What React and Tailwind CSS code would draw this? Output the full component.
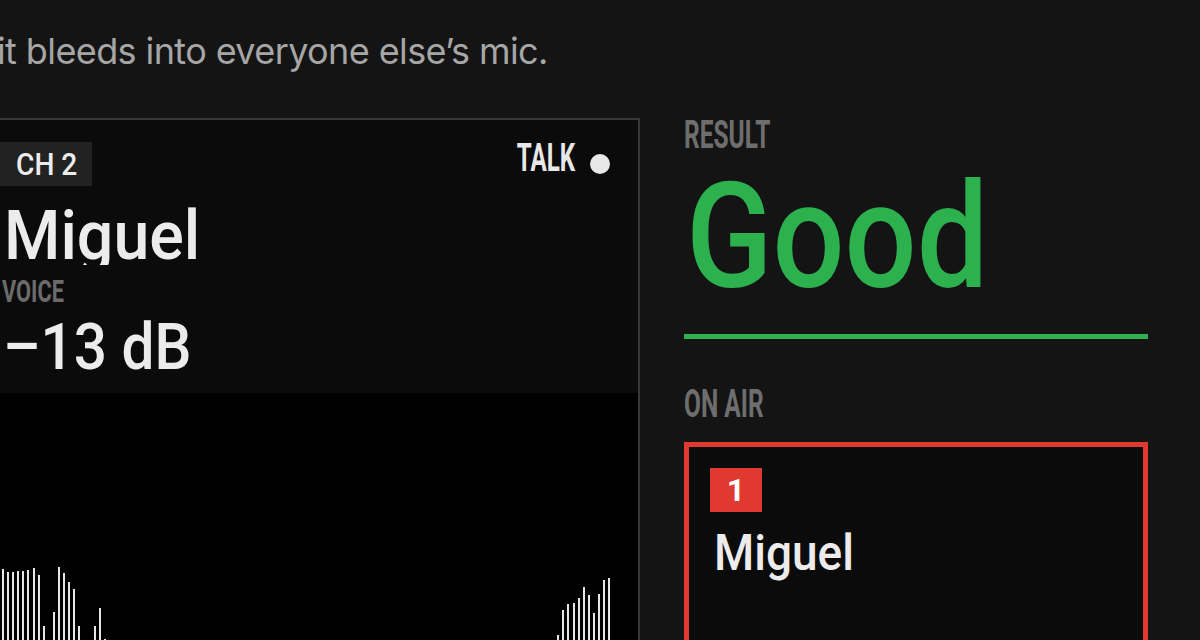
import React from "react";

// Visible bar heights (px) of the level history, oldest on the left.
const LEVELS = (() => {
  const head = [71, 68, 68, 69, 69, 70, 72, 65, 14, 0, 28, 73, 67, 58, 51, 14, 0, 0, 14, 32, 1];
  const tail = [5, 30, 36, 37, 42, 53, 45, 27, 46, 60, 62];
  const silence = Array(120 - head.length - tail.length).fill(0);
  return [...head, ...silence, ...tail];
})();

function Waveform() {
  return (
    <div className="h-[267px] bg-black pl-[23px]">
      <div className="flex h-full w-[610px] items-end justify-between">
        {LEVELS.map((h, i) => (
          <span
            key={i}
            className="block w-[2px] shrink-0 bg-[#e6e6e6]"
            style={{ height: `${h + 20}px` }}
          />
        ))}
      </div>
    </div>
  );
}

function ChannelCard() {
  return (
    <section className="-ml-[23px] w-[663px] shrink-0 border-2 border-b-0 border-[#383838] bg-[#0b0b0b]">
      <div className="pl-[21px] pr-[28px] pt-[22px] pb-[18px]">
        <div className="flex items-start justify-between">
          <span className="flex h-[44px] w-[92px] items-center overflow-hidden bg-[#222222] pl-[16px] text-[32px] font-medium text-[#ececec]">
            <span className="inline-block origin-left scale-x-[0.88] whitespace-nowrap">CH 2</span>
          </span>
          <div className="flex items-start gap-[15px]">
            <span className="-mt-[1px] inline-block origin-right scale-x-[0.62] text-[39px] leading-[34px] font-bold text-[#e8e8e8]">
              TALK
            </span>
            <span className="mt-[12px] block h-[20px] w-[20px] rounded-full bg-[#e8e8e8]" />
          </div>
        </div>

        <div className="mt-[20px] truncate pl-[4px] text-[69px] leading-[59px] font-medium text-[#ececec]">
          <span className="inline-block origin-left scale-x-[0.935]">Miguel</span>
        </div>

        <div className="mt-[12px] pl-[2px] text-[32px] leading-[28px] font-bold text-[#6b6b6b]">
          <span className="inline-block origin-left scale-x-[0.68]">VOICE</span>
        </div>

        <div className="mt-[14px] whitespace-nowrap pl-[3px] text-[65px] leading-[56px] font-medium text-[#ececec]">
          <span className="inline-block origin-left scale-x-[0.9]">–13 dB</span>
        </div>
      </div>
      <Waveform />
    </section>
  );
}

function ResultPanel() {
  return (
    <div className="w-[464px] shrink-0">
      <div className="text-[38px] leading-[34px] font-bold text-[#6e6e6e]">
        <span className="inline-block origin-left scale-x-[0.645]">RESULT</span>
      </div>

      <div className="mt-[13px] pl-[2px] text-[146px] leading-none font-medium text-[#2db14f]">
        <span className="inline-block origin-left scale-x-[0.87]">Good</span>
      </div>

      <div className="mt-[23px] h-[5px] bg-[#2db14f]" />

      <div className="mt-[48px] text-[38px] leading-[34px] font-bold text-[#6e6e6e]">
        <span className="inline-block origin-left scale-x-[0.645] whitespace-nowrap">ON AIR</span>
      </div>

      <div className="mt-[21px] h-[300px] border-[5px] border-[#e0392f] bg-[#0b0b0b] p-[21px]">
        <span className="flex h-[44px] w-[52px] items-center justify-center bg-[#e0392f] text-[32px] font-bold text-white">
          1
        </span>
        <div className="mt-[16px] pl-[4px] text-[50px] leading-none font-medium text-[#ececec]">
          <span className="inline-block origin-left scale-x-[0.92]">Miguel</span>
        </div>
      </div>
    </div>
  );
}

export default function App() {
  return (
    <div className="h-[640px] w-[1200px] overflow-hidden bg-[#141414] font-[Roboto,sans-serif]">
      <p className="-ml-[3px] whitespace-nowrap pt-[29px] font-[Inter,sans-serif] text-[36px] leading-[44px] tracking-[-0.6px] text-[#a6a6a6]">
        it bleeds into everyone else’s mic.
      </p>
      <div className="mt-[45px] flex gap-[44px]">
        <ChannelCard />
        <ResultPanel />
      </div>
    </div>
  );
}
